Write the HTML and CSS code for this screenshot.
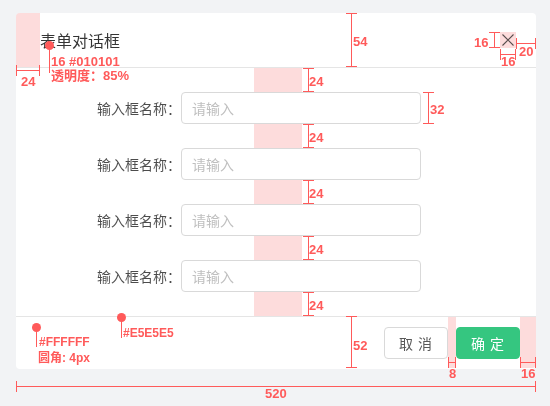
FILE: index.html
```html
<!DOCTYPE html>
<html lang="zh-CN">
<head>
<meta charset="UTF-8">
<title>表单对话框</title>
<link rel="stylesheet" href="styles.css">
</head>
<body>

<div class="canvas">

    <!-- Dialog -->
    <div class="dialog">
        <div class="dialog-header">
            <span class="dialog-title">表单对话框</span>
            <button class="dialog-close" type="button">
                <svg width="16" height="16" viewBox="0 0 16 16"><path d="M2.5 2.5 L13.5 13.5 M13.5 2.5 L2.5 13.5" stroke="#595959" stroke-width="1.1" fill="none"/></svg>
            </button>
        </div>
        <form class="dialog-body">
            <div class="form-row"><label>输入框名称：</label><input type="text" placeholder="请输入"></div>
            <div class="form-row"><label>输入框名称：</label><input type="text" placeholder="请输入"></div>
            <div class="form-row"><label>输入框名称：</label><input type="text" placeholder="请输入"></div>
            <div class="form-row"><label>输入框名称：</label><input type="text" placeholder="请输入"></div>
        </form>
        <div class="dialog-footer">
            <button class="btn" type="button">取 消</button>
            <button class="btn btn-primary" type="button">确 定</button>
        </div>
    </div>

    <!-- Spec annotations -->
    <div class="pink pink-head"></div>
    <div class="dim-h d-head"></div>
    <span class="note n-head">24</span>

    <div class="pin pin-title"></div>
    <span class="note n-title">16 #010101</span>
    <span class="note n-alpha">透明度：85%</span>

    <div class="dim-v d-header-h"></div>
    <span class="note n-header-h">54</span>

    <div class="pink pink-close"></div>
    <div class="dim-v d-close-h"></div>
    <span class="note n-close-h">16</span>
    <div class="dim-h d-close-w"></div>
    <span class="note n-close-w">16</span>
    <div class="dim-h d-close-r"></div>
    <span class="note n-close-r">20</span>

    <div class="gap-marks">
        <div class="gap-mark"><div class="pink"></div><div class="dim-v"></div><span class="note">24</span></div>
        <div class="gap-mark"><div class="pink"></div><div class="dim-v"></div><span class="note">24</span></div>
        <div class="gap-mark"><div class="pink"></div><div class="dim-v"></div><span class="note">24</span></div>
        <div class="gap-mark"><div class="pink"></div><div class="dim-v"></div><span class="note">24</span></div>
        <div class="gap-mark"><div class="pink"></div><div class="dim-v"></div><span class="note">24</span></div>
    </div>

    <div class="dim-v d-input-h"></div>
    <span class="note n-input-h">32</span>

    <div class="dim-v d-footer-h"></div>
    <span class="note n-footer-h">52</span>

    <div class="pink pink-btn-gap"></div>
    <div class="dim-h d-btn-gap"></div>
    <span class="note n-btn-gap">8</span>
    <div class="pink pink-footer-r"></div>
    <div class="dim-h d-footer-r"></div>
    <span class="note n-footer-r">16</span>

    <div class="pin pin-bg"></div>
    <span class="note n-bg">#FFFFFF</span>
    <span class="note n-radius">圆角: 4px</span>

    <div class="pin pin-line"></div>
    <span class="note n-line">#E5E5E5</span>

    <div class="dim-h d-width"></div>
    <span class="note n-width">520</span>
</div>

</body>
</html>
```

FILE: styles.css
```css
/* Page */
html, body {
    margin: 0;
    padding: 0;
    background: #f2f3f5;
    font-family: "Noto Sans CJK SC", "Noto Sans", sans-serif;
}

.canvas {
    position: relative;
    width: 550px;
    height: 406px;
    padding: 13px 0 0 16px;
    box-sizing: border-box;
    overflow: hidden;
}

/* Dialog */
.dialog {
    width: 520px;
    background: #fff;
    border-radius: 4px;
}

.dialog-header {
    height: 54px;
    display: flex;
    align-items: center;
    justify-content: space-between;
    padding: 0 20px 0 24px;
    border-bottom: 1px solid #e5e5e5;
}

.dialog-title {
    font-size: 16px;
    color: rgba(1, 1, 1, 0.8);
    line-height: 22px;
}

.dialog-close {
    width: 16px;
    height: 16px;
    padding: 0;
    border: none;
    background: none;
    display: flex;
}

.dialog-body {
    margin: 0;
    padding: 24px 0;
    display: flex;
    flex-direction: column;
    gap: 24px;
}

.form-row {
    display: flex;
    align-items: center;
    height: 32px;
    padding-left: 77px;
}

.form-row label {
    width: 88px;
    text-align: right;
    font-size: 14px;
    color: rgba(0, 0, 0, 0.7);
}

.form-row input {
    width: 240px;
    height: 32px;
    box-sizing: border-box;
    border: 1px solid #d9d9d9;
    border-radius: 4px;
    padding: 0 10px;
    font-family: inherit;
    font-size: 14px;
    outline: none;
}

.form-row input::placeholder {
    color: #bfbfbf;
}

.dialog-footer {
    height: 52px;
    display: flex;
    align-items: center;
    justify-content: flex-end;
    gap: 8px;
    padding: 0 16px;
    border-top: 1px solid #e5e5e5;
}

.btn {
    width: 64px;
    height: 32px;
    border: 1px solid #d9d9d9;
    border-radius: 4px;
    background: #fff;
    color: #595959;
    font-family: inherit;
    font-size: 14px;
    letter-spacing: 1px;
    padding: 0;
}

.btn-primary {
    border-color: #35c680;
    background: #35c680;
    color: #fff;
}

/* Annotation parts */
.pink {
    position: absolute;
    background: #fddcdc;
    mix-blend-mode: multiply;
}

.note {
    position: absolute;
    font-family: "Liberation Sans", "Noto Sans CJK SC", sans-serif;
    font-weight: bold;
    font-size: 13px;
    line-height: 13px;
    color: #ff5a5a;
    white-space: nowrap;
}

.dim-v, .dim-h {
    position: absolute;
    background: #ff5a5a;
}

.dim-v { width: 1px; }
.dim-h { height: 1px; }

.dim-v::before, .dim-v::after,
.dim-h::before, .dim-h::after {
    content: "";
    position: absolute;
    background: #ff5a5a;
}

.dim-v::before, .dim-v::after { left: -5px; width: 11px; height: 1px; }
.dim-v::before { top: 0; }
.dim-v::after { bottom: 0; }

.dim-h::before, .dim-h::after { top: -5px; width: 1px; height: 11px; }
.dim-h::before { left: 0; }
.dim-h::after { right: 0; }

.pin {
    position: absolute;
    width: 1px;
    background: #ff5a5a;
}

.pin::before {
    content: "";
    position: absolute;
    top: -4px;
    left: -4px;
    width: 9px;
    height: 9px;
    border-radius: 50%;
    background: #ff5a5a;
}

/* Header annotations */
.pink-head { left: 16px; top: 13px; width: 24px; height: 54px; border-top-left-radius: 4px; }
.d-head { left: 16px; top: 70px; width: 24px; }
.n-head { left: 21px; top: 75px; }

.pin-title { left: 49px; top: 45px; height: 28px; }
.n-title { left: 51px; top: 55px; }
.n-alpha { left: 51px; top: 69px; }

.d-header-h { left: 351px; top: 13px; height: 54px; }
.n-header-h { left: 353px; top: 35px; }

.pink-close { left: 500px; top: 32px; width: 16px; height: 16px; }
.d-close-h { left: 494px; top: 32px; height: 16px; }
.n-close-h { left: 474px; top: 36px; }
.d-close-w { left: 500px; top: 54px; width: 16px; }
.n-close-w { left: 501px; top: 55px; }
.d-close-r { left: 516px; top: 43px; width: 20px; }
.n-close-r { left: 519px; top: 45px; }

/* Body gap marks */
.gap-marks {
    position: absolute;
    left: 254px;
    top: 68px;
    display: flex;
    flex-direction: column;
    gap: 32px;
}

.gap-mark {
    position: relative;
    width: 48px;
    height: 24px;
}

.gap-mark .pink { left: 0; top: 0; width: 48px; height: 24px; }
.gap-mark .dim-v { left: 54px; top: 0; height: 24px; }
.gap-mark .note { left: 55px; top: 7px; }

.d-input-h { left: 428px; top: 92px; height: 32px; }
.n-input-h { left: 430px; top: 103px; }

/* Footer annotations */
.d-footer-h { left: 351px; top: 316px; height: 52px; }
.n-footer-h { left: 353px; top: 339px; }

.pink-btn-gap { left: 448px; top: 317px; width: 8px; height: 51px; }
.d-btn-gap { left: 448px; top: 362px; width: 8px; }
.n-btn-gap { left: 449px; top: 367px; }

.pink-footer-r { left: 520px; top: 317px; width: 16px; height: 51px; border-bottom-right-radius: 4px; }
.d-footer-r { left: 520px; top: 362px; width: 16px; }
.n-footer-r { left: 521px; top: 367px; }

.pin-bg { left: 36px; top: 327px; height: 20px; }
.n-bg { left: 39px; top: 336px; font-size: 12px; line-height: 12px; }
.n-radius { left: 38px; top: 352px; font-size: 12px; }

.pin-line { left: 121px; top: 317px; height: 21px; }
.n-line { left: 123px; top: 327px; font-size: 12px; line-height: 12px; }

.d-width { left: 16px; top: 386px; width: 520px; }
.n-width { left: 265px; top: 387px; }
```
